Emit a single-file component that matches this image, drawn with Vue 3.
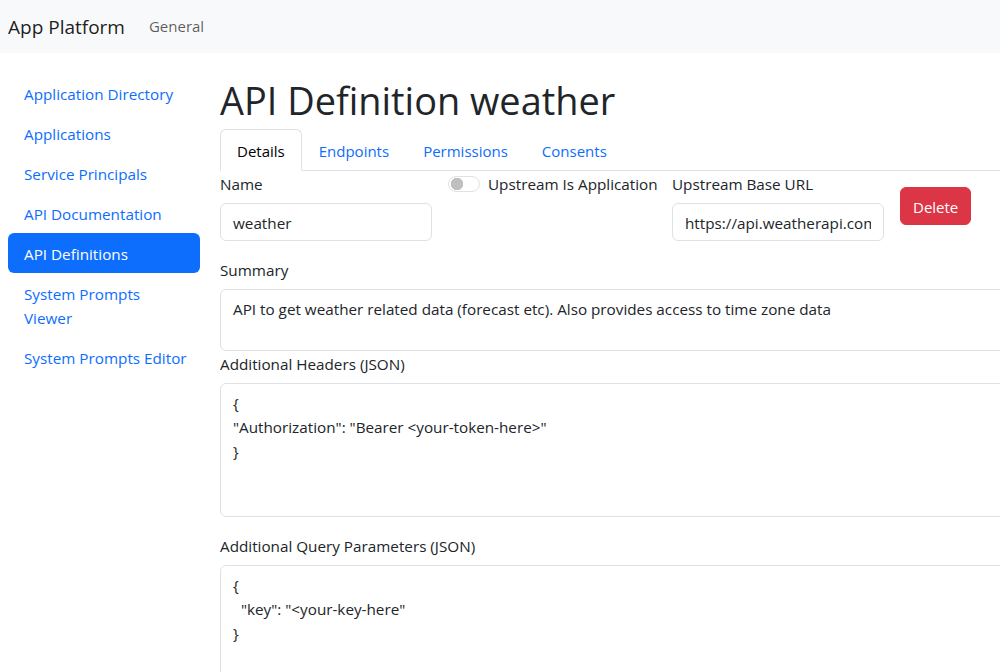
<script setup>
import { ref } from 'vue'

const sideLinks = [
  { label: 'Application Directory' },
  { label: 'Applications' },
  { label: 'Service Principals' },
  { label: 'API Documentation' },
  { label: 'API Definitions', active: true },
  { label: 'System Prompts Viewer' },
  { label: 'System Prompts Editor' }
]

const tabs = ['Details', 'Endpoints', 'Permissions', 'Consents']
const activeTab = ref('Details')

const name = ref('weather')
const isApplication = ref(false)
const baseUrl = ref('https://api.weatherapi.com/v1')
const summary = ref('API to get weather related data (forecast etc). Also provides access to time zone data')
const headers = ref('{\n"Authorization": "Bearer <your-token-here>"\n}')
const queryParams = ref('{\n  "key": "<your-key-here"\n}')
</script>

<template>
  <div class="page">
    <nav class="navbar">
      <a class="brand" href="#">App Platform</a>
      <a class="nav-link" href="#">General</a>
    </nav>

    <div class="layout">
      <aside class="sidebar">
        <a
          v-for="link in sideLinks"
          :key="link.label"
          href="#"
          class="pill"
          :class="{ active: link.active }"
        >{{ link.label }}</a>
      </aside>

      <main class="content">
        <h1>API Definition weather</h1>

        <div class="tabs">
          <a
            v-for="tab in tabs"
            :key="tab"
            href="#"
            class="tab"
            :class="{ active: tab === activeTab }"
            @click.prevent="activeTab = tab"
          >{{ tab }}</a>
        </div>

        <div class="top-row">
          <div class="col">
            <label>Name</label>
            <input v-model="name" type="text" class="control" />
          </div>
          <div class="col switch-col">
            <input v-model="isApplication" type="checkbox" class="switch" />
            <label>Upstream Is Application</label>
          </div>
          <div class="col">
            <label>Upstream Base URL</label>
            <input v-model="baseUrl" type="text" class="control" />
          </div>
          <button class="btn-delete">Delete</button>
        </div>

        <label>Summary</label>
        <textarea v-model="summary" class="control summary" rows="2"></textarea>

        <label>Additional Headers (JSON)</label>
        <textarea v-model="headers" class="control json" rows="5"></textarea>

        <label class="query-label">Additional Query Parameters (JSON)</label>
        <textarea v-model="queryParams" class="control json" rows="5"></textarea>
      </main>
    </div>
  </div>
</template>

<style>
html,
body {
  margin: 0;
  overflow: hidden;
}
</style>

<style scoped>
.page {
  width: 1000px;
  height: 672px;
  overflow: hidden;
  background: #fff;
  color: #212529;
  font-family: "Open Sans", sans-serif;
  font-size: 15.25px;
  line-height: 24px;
}

.navbar {
  display: flex;
  align-items: center;
  height: 53px;
  padding: 0 8px;
  background: #f8f9fa;
}

.brand {
  margin-right: 24px;
  font-size: 19px;
  color: rgba(0, 0, 0, 0.9);
  text-decoration: none;
}

.nav-link {
  padding-bottom: 1px;
  font-size: 15px;
  color: rgba(0, 0, 0, 0.65);
  text-decoration: none;
}

.layout {
  display: flex;
}

.sidebar {
  display: flex;
  flex-direction: column;
  flex: none;
  width: 192px;
  margin: 20px 20px 0 8px;
}

.pill {
  padding: 9px 12px 7px 16px;
  border-radius: 6px;
  color: #0d6efd;
  text-decoration: none;
}

.pill.active {
  background: #0d6efd;
  color: #fff;
}

.content {
  flex: none;
  width: 1100px;
}

h1 {
  margin: 23px 0 5px;
  font-size: 37.9px;
  font-weight: 400;
  line-height: 48px;
}

.tabs {
  display: flex;
  height: 42px;
  box-sizing: border-box;
  border-bottom: 1px solid #dee2e6;
}

.tab {
  height: 42px;
  box-sizing: border-box;
  padding: 9px 16px 7px;
  border: 1px solid transparent;
  border-radius: 6px 6px 0 0;
  font-size: 15px;
  color: #0d6efd;
  text-decoration: none;
}

.tab.active {
  border-color: #dee2e6 #dee2e6 #fff;
  background: #fff;
  color: #000;
}

label {
  display: block;
  margin-bottom: 7px;
  white-space: nowrap;
}

.control {
  display: block;
  width: 100%;
  box-sizing: border-box;
  padding: 7px 12px 5px;
  border: 1px solid #dee2e6;
  border-radius: 6px;
  background: #fff;
  color: #212529;
  font: inherit;
  outline: none;
}

textarea.control {
  resize: none;
  overflow: hidden;
}

.top-row {
  display: flex;
  align-items: center;
  gap: 16px;
  height: 70px;
  margin-bottom: 17px;
}

.col {
  flex: none;
  width: 212px;
  align-self: flex-start;
  padding-top: 1px;
}

.switch-col {
  display: flex;
  gap: 8px;
  width: 208px;
}

.switch {
  flex: none;
  width: 32px;
  height: 16px;
  margin: 4px 0 0;
  border: 1px solid #dee2e6;
  border-radius: 16px;
  appearance: none;
  background: radial-gradient(circle at 8px 7px, #bfbfbf 6px, #fff 6.5px);
}

.btn-delete {
  padding: 7px 12px 5px;
  height: 38px;
  border: 1px solid #dc3545;
  border-radius: 6px;
  background: #dc3545;
  color: #fff;
  font: inherit;
  font-size: 15px;
}

.summary {
  margin-bottom: 1px;
}

.json {
  margin-bottom: 17px;
}
</style>
